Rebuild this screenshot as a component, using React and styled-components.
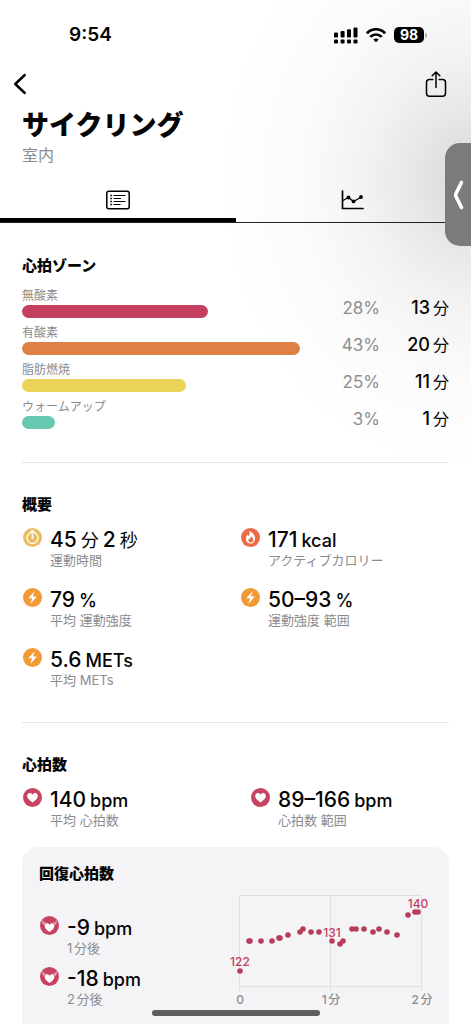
import styled, { createGlobalStyle } from "styled-components";

const GlobalStyle = createGlobalStyle`
  * {
    box-sizing: border-box;
  }

  body {
    margin: 0;
    background: #fff;
    color: #050505;
    font-family: Inter, "Noto Sans CJK JP", sans-serif;
    text-autospace: normal;
  }

  h1, h2, p, ul {
    margin: 0;
    padding: 0;
  }
`;

const Screen = styled.div`
  position: relative;
  height: 100vh;
  overflow: hidden;
  background: radial-gradient(
    ellipse 250px 290px at 100% 180px,
    #d6d6d6 0%,
    #e5e5e5 20%,
    #f2f2f2 42%,
    #fafafa 65%,
    #fff 100%
  );
`;

const StatusBar = styled.div`
  display: flex;
  align-items: center;
  justify-content: space-between;
  height: 60px;
  padding: 10px 47px 0 69px;
`;

const Clock = styled.time`
  font-size: 19px;
  line-height: 24px;
  font-weight: 600;
`;

const StatusIcons = styled.div`
  display: flex;
  align-items: center;
  gap: 8px;
`;

const Battery = styled.span`
  position: relative;
  width: 30px;
  height: 16px;
  border-radius: 5px;
  background: #000;
  color: #fff;
  font-size: 14px;
  line-height: 16px;
  font-weight: 700;
  text-align: center;

  &::after {
    content: "";
    position: absolute;
    top: 6px;
    right: -3px;
    width: 2px;
    height: 5px;
    border-radius: 0 2px 2px 0;
    background: #b0b0b0;
  }
`;

const NavBar = styled.nav`
  display: flex;
  align-items: center;
  justify-content: space-between;
  height: 48px;
  padding: 0 23px 0 12px;
`;

const IconButton = styled.button`
  display: flex;
  padding: 0;
  border: none;
  background: none;
  color: #000;
  cursor: pointer;
`;

const Heading = styled.header`
  padding: 0 22px;
`;

const Title = styled.h1`
  font-size: 27px;
  line-height: 36px;
  font-weight: 900;
`;

const Subtitle = styled.p`
  color: #8c8c8e;
  font-size: 16px;
  line-height: 22px;
`;

const Tabs = styled.div`
  display: flex;
  margin-top: 14px;
  border-bottom: 1px solid #222;
`;

const Tab = styled.button`
  flex: 1;
  display: flex;
  justify-content: center;
  padding: 10px 0 8px;
  border: none;
  border-bottom: 4px solid ${(p) => (p.$active ? "#000" : "transparent")};
  background: none;
  color: #000;
  cursor: pointer;
`;

const Content = styled.main`
  padding: 0 22px;
`;

const Section = styled.section`
  padding: ${(p) => p.$padding};
  border-bottom: ${(p) => (p.$last ? "none" : "1px solid #e6e6e7")};
`;

const SectionTitle = styled.h2`
  font-size: 15px;
  line-height: 24px;
  font-weight: 900;
`;

const ZoneList = styled.ul`
  display: grid;
  margin-top: 10px;
  list-style: none;
`;

const Zone = styled.li`
  display: grid;
  grid-template-columns: 1fr 80px 69px;
  align-items: center;
  height: 37px;
  line-height: 24px;
  text-align: right;
`;

const ZoneName = styled.div`
  color: #8c8c8e;
  font-size: 12px;
  line-height: 16px;
  text-align: left;
`;

const Bar = styled.div`
  height: 13px;
  margin: 1px 0 7px;
  border-radius: 7px;
  background: ${(p) => p.$color};
`;

const Percent = styled.span`
  padding-top: 2px;
  color: #8e8e90;
  font-size: 17px;
`;

const Minutes = styled.span`
  display: flex;
  align-items: baseline;
  justify-content: flex-end;
  gap: 3px;
  padding-top: 2px;
  font-size: 18px;
  font-weight: 500;
`;

// counters such as 分 and 秒, set lighter than the digits
const Kanji = styled.small`
  font-size: ${(p) => p.$size}px;
  line-height: 20px;
  font-weight: 400;
`;

const Unit = styled.small`
  font-size: 18px;
  line-height: 20px;
`;

const Metrics = styled.div`
  display: grid;
  grid-template-columns: ${(p) => p.$columns};
  row-gap: 20px;
  margin-top: 11px;
`;

const MetricItem = styled.div`
  display: flex;
  gap: 8px;
  padding-left: 1px;

  > svg {
    flex: none;
  }
`;

const MetricValue = styled.p`
  display: flex;
  align-items: baseline;
  gap: 4px;
  height: 24px;
  font-size: 21px;
  line-height: 24px;
  font-weight: 500;
  white-space: nowrap;
`;

const MetricLabel = styled.p`
  color: #8c8c8e;
  font-size: 13px;
  line-height: 16px;
  white-space: nowrap;
`;

const Card = styled.section`
  display: grid;
  grid-template-columns: 1fr 231px;
  min-height: 210px;
  padding: 15px 0 0 17px;
  border-radius: 16px;
  background: #f4f4f7;
`;

const RecoveryMetrics = styled.div`
  display: grid;
  row-gap: 11px;
  margin-top: 30px;
`;

const Chart = styled.svg`
  width: 231px;
  height: 130px;
  margin-top: 26px;
  font-size: 12px;
  font-weight: 500;
  text-anchor: middle;
`;

const SideHandle = styled.button`
  position: absolute;
  top: 143px;
  right: 0;
  display: flex;
  align-items: center;
  width: 26px;
  height: 103px;
  padding: 0 0 0 7px;
  border: none;
  border-radius: 15px 0 0 15px;
  background: #7b7b7b;
  color: #fff;
`;

const HomeIndicator = styled.div`
  position: absolute;
  bottom: 8px;
  left: 50%;
  width: 168px;
  height: 6px;
  margin-left: -84px;
  border-radius: 3px;
  background: #5e5e60;
`;

const icons = {
  timer: {
    color: "#e8bd62",
    mark: (
      <g fill="none" stroke="#fff" strokeLinecap="round">
        <circle cx="9.5" cy="10" r="5.5" strokeWidth="1.3" />
        <path d="M8.2 3.2h2.6" strokeWidth="1.5" />
        <path d="M9.5 6.8v3.4" strokeWidth="1.5" />
      </g>
    ),
  },
  bolt: {
    color: "#f19a37",
    mark: <path d="M11.6 3.2L5.3 10.2h3.8L7.4 15.9l6.4-7.3H9.9z" fill="#fff" />,
  },
  flame: {
    color: "#ec6a45",
    mark: (
      <>
        <path d="M8.2 2.9c3.2 1.3 5.9 4 5.9 7.4 0 3-2 5.3-4.6 5.3S5 13.5 5 10.7c0-1.6.7-3 1.7-4.1.3.8.7 1.300 1.300 1.600C8.600 6.300 8.800 4.700 8.200 2.900z" fill="#fff" />
        <path d="M9.9 8.300c1.500 1.100 2.300 2.500 2.300 3.700 0 1.500-1 2.400-2.400 2.400s-2.400-.9-2.400-2.300c0-.8.3-1.400.8-1.900.2.400.5.600.8.700.6-.7.9-1.600.9-2.600z" fill="#ec6a45" />
      </>
    ),
  },
  heart: {
    color: "#c74362",
    mark: (
      <path d="M9.500 14.400C6.200 12.200 4.200 10.300 4.200 8c0-1.700 1.200-2.900 2.700-2.900 1.100 0 2 .6 2.600 1.600.6-1 1.500-1.600 2.600-1.600 1.500 0 2.700 1.200 2.700 2.900 0 2.300-2 4.200-5.300 6.400z" fill="#fff" />
    ),
  },
  recovery: {
    color: "#c74362",
    mark: (
      <>
        <path d="M9.5 15.900C6.500 13.900 4.700 12.100 4.700 10c0-1.600 1-2.700 2.400-2.700 1 0 1.900.6 2.400 1.500.5-.9 1.400-1.500 2.400-1.500 1.400 0 2.400 1.100 2.400 2.700 0 2.100-1.800 3.900-4.800 5.900z" fill="#fff" />
        <path d="M2.800 4.900l.3 2.700 2.400-.9M3.100 7.600l1.400 1.200M16.200 4.900l-.3 2.700-2.400-.9M15.900 7.600l-1.400 1.200" fill="none" stroke="#f3d3da" strokeWidth="0.900" strokeLinecap="round" />
      </>
    ),
  },
};

const zones = [
  { name: "無酸素", color: "#c5405f", percent: 28, minutes: 13, width: 67 },
  { name: "有酸素", color: "#df8146", percent: 43, minutes: 20, width: 100 },
  { name: "脂肪燃焼", color: "#e9d457", percent: 25, minutes: 11, width: 59 },
  { name: "ウォームアップ", color: "#66c9b0", percent: 3, minutes: 1, width: 12 },
];

const points = [
  [22, 83], [31, 53], [32, 53], [43, 53], [54, 53], [61, 50], [62, 50],
  [70, 47], [82, 44], [85, 41], [93, 44], [101, 44], [114, 53],
  [122, 56], [125, 53], [134, 41], [138, 41], [146, 41], [155, 44],
  [161, 41], [169, 44], [179, 47], [190, 27], [197, 24], [200, 24],
];

const Metric = ({ icon, label, children }) => (
  <MetricItem>
    <svg width="19" height="19" viewBox="0 0 19 19" aria-hidden="true">
      <circle cx="9.5" cy="9.5" r="9.5" fill={icons[icon].color} />
      {icons[icon].mark}
    </svg>
    <div>
      <MetricValue>{children}</MetricValue>
      <MetricLabel>{label}</MetricLabel>
    </div>
  </MetricItem>
);

const RecoveryChart = () => (
  <Chart viewBox="0 0 231 130" role="img" aria-label="回復心拍数">
    <path d="M21.5 103V7.5H203.5V103M21.5 98.5H203.5M112.5 7.5V103" fill="none" stroke="#dfdfe2" />
    {points.map(([x, y]) => (
      <circle key={`${x}-${y}`} cx={x} cy={y} r="2.8" fill="#b73c58" />
    ))}
    <g fill="#c5405f">
      <text x="22" y="78">122</text>
      <text x="114" y="49">131</text>
      <text x="200" y="20">140</text>
    </g>
    <g fill="#8c8c8e">
      <text x="22" y="116">0</text>
      <text x="113" y="116">1分</text>
      <text x="204" y="116">2分</text>
    </g>
  </Chart>
);

const App = () => {
  return (
    <>
      <GlobalStyle />
      <Screen>
        <StatusBar>
          <Clock>9:54</Clock>
          <StatusIcons>
            <svg width="24" height="17" viewBox="0 0 24 17" aria-hidden="true">
              <rect x="0" y="5.5" width="4" height="5" rx="1" />
              <rect x="6.6" y="4" width="4" height="6.5" rx="1" />
              <rect x="13" y="2.3" width="4" height="8.2" rx="1" />
              <rect x="19.5" y="0.5" width="4" height="10" rx="1" />
              <rect x="0" y="12.5" width="4" height="4" rx="1" />
              <rect x="6.6" y="12.5" width="4" height="4" rx="1" />
              <rect x="13" y="12.5" width="4" height="4" rx="1" />
              <rect x="19.5" y="12.5" width="4" height="4" rx="1" />
            </svg>
            <svg width="20" height="15" viewBox="0 0 20 15" fill="none" stroke="#000" strokeWidth="2.6" aria-hidden="true">
              <path d="M.9 5.3C6-.1 14-.1 19.1 5.3" />
              <path d="M4.3 8.9c3.300-3.300 8.100-3.300 11.400 0" />
              <path d="M7.300 11.500c1.600-1.400 3.800-1.400 5.400 0L10 14.300z" fill="#000" stroke="none" />
            </svg>
            <Battery>98</Battery>
          </StatusIcons>
        </StatusBar>

        <NavBar>
          <IconButton aria-label="戻る">
            <svg width="16" height="22" viewBox="0 0 16 22" fill="none" stroke="currentColor" strokeWidth="2.4" strokeLinecap="round" strokeLinejoin="round">
              <path d="M12.8 2L3.2 11l9.6 9" />
            </svg>
          </IconButton>
          <IconButton aria-label="共有">
            <svg width="24" height="28" viewBox="0 0 24 28" fill="none" stroke="currentColor" strokeWidth="1.5" strokeLinecap="round" strokeLinejoin="round">
              <path d="M8.8 9.5H5.5a3 3 0 0 0-3 3v10.700a3 3 0 0 0 3 3h13a3 3 0 0 0 3-3V12.500a3 3 0 0 0-3-3h-3.300" />
              <path d="M12 17.500V2M8.200 5.700L12 2l3.800 3.700" />
            </svg>
          </IconButton>
        </NavBar>

        <Heading>
          <Title>サイクリング</Title>
          <Subtitle>室内</Subtitle>
        </Heading>

        <Tabs role="tablist">
          <Tab role="tab" aria-selected="true" aria-label="詳細" $active>
            <svg width="24" height="20" viewBox="0 0 24 20" fill="none" stroke="currentColor">
              <rect x="0.8" y="1.3" width="22.4" height="17.4" rx="2" strokeWidth="1.5" />
              <path d="M8 5.500h11M8 8.500h6.500M8 11.500h11M8 14.500h6" strokeWidth="1.200" strokeLinecap="round" />
              <path d="M4.300 5.500h1.600M4.300 8.500h1.600M4.300 11.500h1.600M4.300 14.500h1.600" strokeWidth="1.500" />
            </svg>
          </Tab>
          <Tab role="tab" aria-selected="false" aria-label="グラフ">
            <svg width="24" height="20" viewBox="0 0 24 20" fill="none" stroke="currentColor">
              <path d="M1.500 1v17.500h20.500" strokeWidth="1.700" strokeLinecap="round" />
              <path d="M2 10.500L7.500 7.500l5 4 7.800-4.500" strokeWidth="1.300" />
              <g fill="currentColor" stroke="none">
                <circle cx="7.500" cy="7.500" r="1.900" />
                <circle cx="12.500" cy="11.400" r="1.900" />
                <circle cx="20" cy="7" r="1.900" />
              </g>
            </svg>
          </Tab>
        </Tabs>

        <Content>
          <Section $padding="31px 0 26px">
            <SectionTitle>心拍ゾーン</SectionTitle>
            <ZoneList>
              {zones.map((z) => (
                <Zone key={z.name}>
                  <div>
                    <ZoneName>{z.name}</ZoneName>
                    <Bar $color={z.color} style={{ width: `${z.width}%` }} />
                  </div>
                  <Percent>{z.percent}%</Percent>
                  <Minutes>
                    {z.minutes}
                    <Kanji $size={16}>分</Kanji>
                  </Minutes>
                </Zone>
              ))}
            </ZoneList>
          </Section>

          <Section $padding="30px 0 34px">
            <SectionTitle>概要</SectionTitle>
            <Metrics $columns="218px 1fr">
              <Metric icon="timer" label="運動時間">
                45<Kanji $size={18}>分</Kanji>2<Kanji $size={18}>秒</Kanji>
              </Metric>
              <Metric icon="flame" label="アクティブカロリー">
                171 <Unit>kcal</Unit>
              </Metric>
              <Metric icon="bolt" label="平均 運動強度">
                79 <Unit>%</Unit>
              </Metric>
              <Metric icon="bolt" label="運動強度 範囲">
                50–93 <Unit>%</Unit>
              </Metric>
              <Metric icon="bolt" label="平均 METs">
                5.6 <Unit>METs</Unit>
              </Metric>
            </Metrics>
          </Section>

          <Section $last $padding="30px 0 19px">
            <SectionTitle>心拍数</SectionTitle>
            <Metrics $columns="228px 1fr">
              <Metric icon="heart" label="平均 心拍数">
                140 <Unit>bpm</Unit>
              </Metric>
              <Metric icon="heart" label="心拍数 範囲">
                89–166 <Unit>bpm</Unit>
              </Metric>
            </Metrics>
          </Section>

          <Card>
            <div>
              <SectionTitle>回復心拍数</SectionTitle>
              <RecoveryMetrics>
                <Metric icon="recovery" label="1分後">
                  -9 <Unit>bpm</Unit>
                </Metric>
                <Metric icon="recovery" label="2分後">
                  -18 <Unit>bpm</Unit>
                </Metric>
              </RecoveryMetrics>
            </div>
            <RecoveryChart />
          </Card>
        </Content>

        <SideHandle aria-label="パネルを開く">
          <svg width="14" height="32" viewBox="0 0 14 32" fill="none" stroke="currentColor" strokeWidth="3.6" strokeLinecap="round" strokeLinejoin="round">
            <path d="M9.500 3.500L4 14.500Q3.300 16 4 17.500L9.500 28.500" />
          </svg>
        </SideHandle>
        <HomeIndicator />
      </Screen>
    </>
  );
};

export default App;
